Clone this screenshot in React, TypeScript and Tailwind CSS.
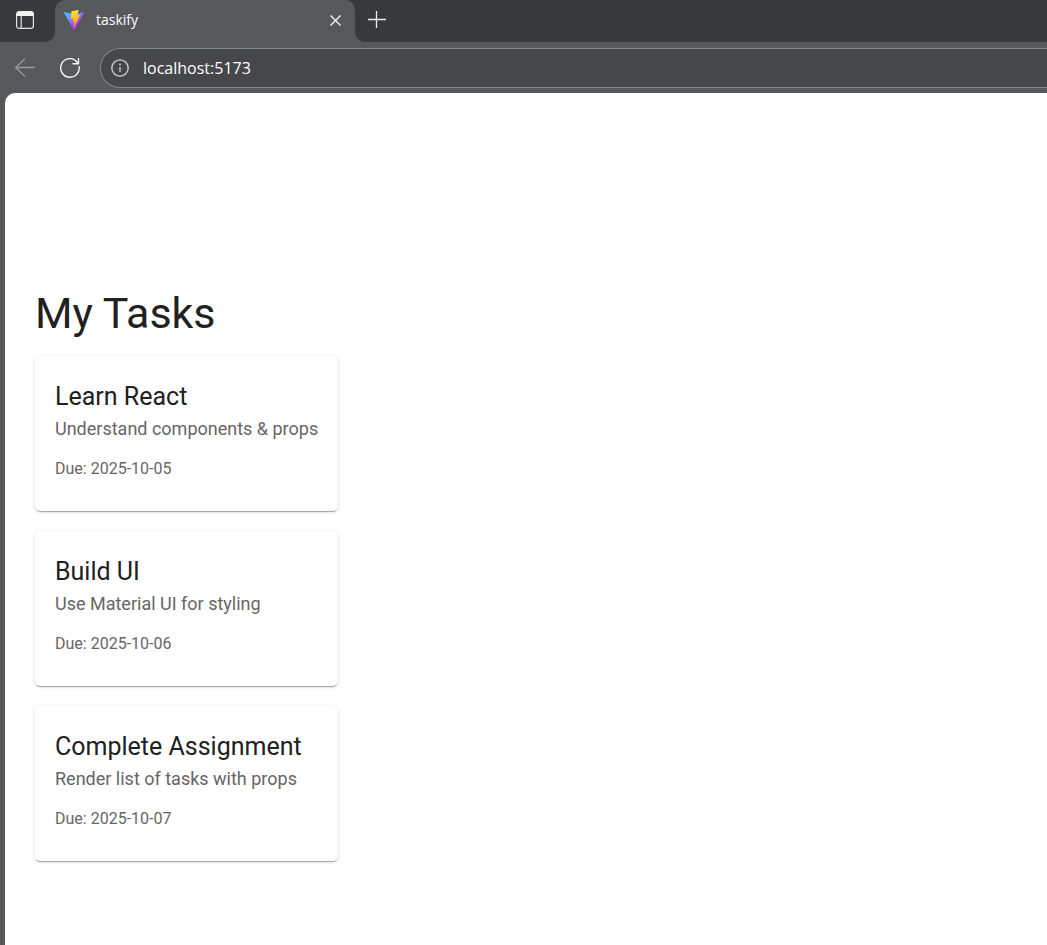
type Task = { title: string; description: string; due: string };

const tasks: Task[] = [
  { title: "Learn React", description: "Understand components & props", due: "2025-10-05" },
  { title: "Build UI", description: "Use Material UI for styling", due: "2025-10-06" },
  { title: "Complete Assignment", description: "Render list of tasks with props", due: "2025-10-07" },
];

function TabActionsIcon() {
  return (
    <svg className="size-5" viewBox="0 0 20 20" fill="none" aria-hidden="true">
      <rect x="1.6" y="1.6" width="16.8" height="16.8" rx="2.6" stroke="#e4e4e4" strokeWidth="1.2" />
      <path d="M1.5 6V4a2.8 2.8 0 0 1 2.8-2.8h11.4A2.8 2.8 0 0 1 18.5 4v2z" fill="#f2f2f2" />
      <path d="M6.2 6v12" stroke="#e4e4e4" strokeWidth="1.2" />
    </svg>
  );
}

function ViteLogo() {
  return (
    <svg className="size-5 shrink-0" viewBox="0 0 256 257" aria-hidden="true">
      <defs>
        <linearGradient id="shield" x1="-0.828%" x2="57.636%" y1="7.652%" y2="78.411%">
          <stop offset="0%" stopColor="#41D1FF" />
          <stop offset="100%" stopColor="#BD34FE" />
        </linearGradient>
        <linearGradient id="bolt" x1="43.376%" x2="50.316%" y1="2.242%" y2="89.03%">
          <stop offset="0%" stopColor="#FFEA83" />
          <stop offset="8.333%" stopColor="#FFDD35" />
          <stop offset="100%" stopColor="#FFA800" />
        </linearGradient>
      </defs>
      <path
        fill="url(#shield)"
        d="M255.153 37.938L134.897 252.976c-2.483 4.44-8.862 4.466-11.382.048L.875 37.958c-2.746-4.814 1.371-10.646 6.827-9.67l120.385 21.517a6.537 6.537 0 0 0 2.322-.004l117.867-21.483c5.438-.991 9.574 4.796 6.877 9.62Z"
      />
      <path
        fill="url(#bolt)"
        d="M185.432.063L96.44 17.501a3.268 3.268 0 0 0-2.634 3.014l-5.474 92.456a3.268 3.268 0 0 0 3.997 3.378l24.777-5.718c2.318-.535 4.413 1.507 3.936 3.838l-7.361 36.047c-.495 2.426 1.782 4.5 4.151 3.78l15.304-4.649c2.372-.72 4.652 1.36 4.15 3.788l-11.698 56.621c-.732 3.542 3.979 5.473 5.943 2.437l1.313-2.028l72.516-144.72c1.215-2.423-.88-5.186-3.54-4.672l-25.505 4.922c-2.396.462-4.435-1.77-3.759-4.114l16.646-57.705c.677-2.35-1.37-4.583-3.769-4.113Z"
      />
    </svg>
  );
}

function CloseIcon() {
  return (
    <svg className="size-3" viewBox="0 0 12 12" fill="none" aria-hidden="true">
      <path d="M1.5 1.5l10 10M11.5 1.5l-10 10" stroke="#f4f4f4" strokeWidth="1.4" />
    </svg>
  );
}

function PlusIcon() {
  return (
    <svg className="size-5" viewBox="0 0 20 20" fill="none" aria-hidden="true">
      <path d="M1 9.5h18M9.5 1v17" stroke="#ededed" strokeWidth="1.3" />
    </svg>
  );
}

function BackIcon() {
  return (
    <svg className="size-5" viewBox="0 0 20 20" fill="none" aria-hidden="true">
      <path d="M20 9.5H.8M9.8.8L.8 9.5l9 8.8" stroke="#98999c" strokeWidth="1.3" />
    </svg>
  );
}

function ReloadIcon() {
  return (
    <svg className="size-5" viewBox="0 0 20 20" fill="none" aria-hidden="true">
      <path
        d="M19.2 8.8A9.3 9.3 0 1 1 14.8 2L18.3 5.6M18.5.5v5.2h-5.6"
        stroke="#f4f4f4"
        strokeWidth="1.4"
        strokeLinecap="round"
        strokeLinejoin="round"
      />
    </svg>
  );
}

function InfoIcon() {
  return (
    <svg className="size-[18px] shrink-0" viewBox="0 0 18 18" fill="none" aria-hidden="true">
      <circle cx="9" cy="9" r="8.2" stroke="#d0d0d1" strokeWidth="1.3" />
      <path d="M9 8v5" stroke="#d0d0d1" strokeWidth="1.3" />
      <circle cx="9" cy="5.5" r="0.9" fill="#d0d0d1" />
    </svg>
  );
}

function TabStrip() {
  return (
    <div className="flex h-[42px]">
      <div className="flex w-[55px] items-center rounded-br-[10px] bg-[#38393c] pb-[2px] pl-[15px]">
        <button type="button" aria-label="Tab actions">
          <TabActionsIcon />
        </button>
      </div>
      <div className="w-[300px] bg-[#38393c]">
        <div className="flex h-full items-center rounded-t-[10px] bg-[#57585c] pr-[14px] pb-[2px] pl-[9px]">
          <ViteLogo />
          <span className="ml-3 flex-1 font-['Open_Sans',sans-serif] text-sm text-white">taskify</span>
          <button type="button" aria-label="Close tab">
            <CloseIcon />
          </button>
        </div>
      </div>
      <div className="flex flex-1 items-center rounded-bl-[10px] bg-[#38393c] pb-[2px] pl-3">
        <button type="button" aria-label="New tab">
          <PlusIcon />
        </button>
      </div>
    </div>
  );
}

function Toolbar() {
  return (
    <div className="flex h-[51px] items-center pl-[15px]">
      <button type="button" aria-label="Back" disabled>
        <BackIcon />
      </button>
      <button type="button" aria-label="Reload" className="ml-[25px]">
        <ReloadIcon />
      </button>
      <label className="ml-5 flex h-10 flex-1 items-center gap-[14px] rounded-l-full border border-r-0 border-[#85868a] bg-[#46474a] pl-[10px]">
        <InfoIcon />
        <input
          type="text"
          aria-label="Address"
          defaultValue="localhost:5173"
          className="min-w-0 flex-1 bg-transparent font-['Open_Sans',sans-serif] text-base text-white outline-none"
        />
      </label>
    </div>
  );
}

function TaskCard({ title, description, due }: Task) {
  return (
    <li className="rounded-[5px] bg-white px-5 pt-[22px] pb-[30px] shadow-[0_3px_1px_-2px_rgba(0,0,0,0.2),0_1px_1px_0_rgba(0,0,0,0.14),0_1px_4px_0_rgba(0,0,0,0.12)]">
      <h2 className="text-[25px] leading-[38px] text-[#212121]">{title}</h2>
      <p className="text-lg leading-[25px] text-[#666666]">{description}</p>
      <p className="mt-[15px] text-base leading-[25px] text-[#666666]">Due: {due}</p>
    </li>
  );
}

export default function App() {
  return (
    <div className="flex min-h-screen flex-col bg-[#57585c]">
      <TabStrip />
      <Toolbar />
      <main className="ml-[5px] flex-1 rounded-tl-[10px] bg-white px-[30px] pt-[195px] pb-10 font-[Roboto,sans-serif]">
        <h1 className="mb-[18px] text-[43px] leading-[50px] text-[#212121]">My Tasks</h1>
        <ul className="flex w-fit flex-col gap-5">
          {tasks.map((task) => (
            <TaskCard key={task.title} {...task} />
          ))}
        </ul>
      </main>
    </div>
  );
}
